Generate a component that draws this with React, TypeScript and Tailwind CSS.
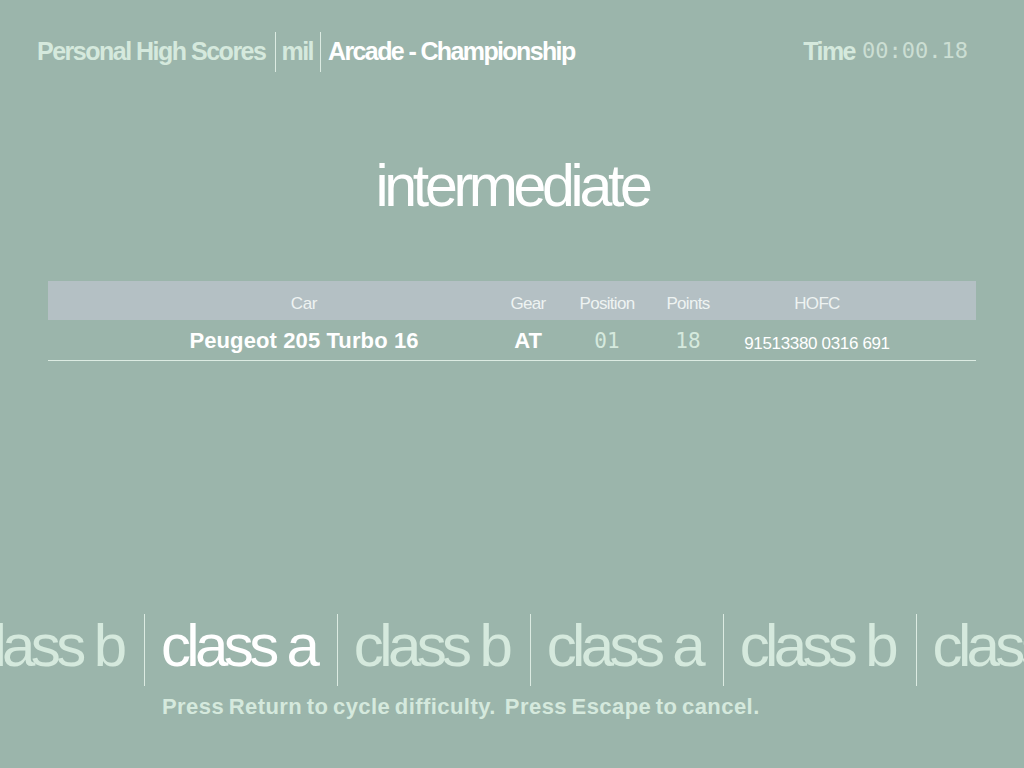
import React from "react";

const sans = { fontFamily: '"Liberation Sans", Arial, sans-serif' };
const mono = { fontFamily: '"DejaVu Sans Mono", "Liberation Mono", monospace' };

const carousel = [
  { label: "class b", active: false },
  { label: "class a", active: true },
  { label: "class b", active: false },
  { label: "class a", active: false },
  { label: "class b", active: false },
  { label: "class a", active: false },
];

function Sep({ className = "" }: { className?: string }) {
  return <div className={`w-px bg-[#dcebe2] ${className}`} />;
}

export default function App() {
  return (
    <div className="flex h-[768px] w-full flex-col overflow-hidden bg-[#9bb5ab]" style={sans}>
      {/* top bar */}
      <header className="flex h-[42px] items-center justify-between pl-[37px] pr-[56px] mt-[30px]">
        <div className="flex h-full items-center text-[25px] font-bold leading-none tracking-[-0.06em]">
          <span className="text-[#d5e9dd]">Personal High Scores</span>
          <Sep className="ml-[10px] mr-[5px] h-[40px] self-end" />
          <span className="text-[#d5e9dd]">mil</span>
          <Sep className="ml-[7px] mr-[7px] h-[40px] self-end" />
          <span className="tracking-[-0.065em] text-white">Arcade - Championship</span>
        </div>
        <div className="flex items-center gap-[7px] leading-none">
          <span className="text-[25px] font-bold tracking-[-0.06em] text-[#d5e9dd]">Time</span>
          <span className="text-[22px] text-[#cbded3]" style={mono}>
            00:00.18
          </span>
        </div>
      </header>

      {/* difficulty title */}
      <h1 className="mt-[85px] text-center text-[59px] leading-none tracking-[-0.073em] text-white">
        intermediate
      </h1>

      {/* scores table */}
      <div className="mx-[48px] mt-[65px]">
        <div className="grid h-[39px] grid-cols-[388px_60px_98px_64px_194px] items-center bg-[#b4c0c4] px-[62px] pt-[6px] text-[17px] leading-none text-[#eef3f2]">
          <div className="flex justify-center tracking-[-0.02em]">Car</div>
          <div className="flex justify-center tracking-[-0.04em]">Gear</div>
          <div className="flex justify-center tracking-[-0.04em]">Position</div>
          <div className="flex justify-center tracking-[-0.04em]">Points</div>
          <div className="flex justify-center tracking-[-0.04em]">HOFC</div>
        </div>
        <div className="grid h-[41px] grid-cols-[388px_60px_98px_64px_194px] items-center border-b border-[#dcebe2] px-[62px] pt-[2px] leading-none">
          <div className="flex justify-center whitespace-nowrap text-[22px] font-bold tracking-[0.005em] text-white">
            Peugeot 205 Turbo 16
          </div>
          <div className="flex justify-center text-[22px] font-bold text-white">AT</div>
          <div className="flex justify-center text-[21px] text-[#d5e9dd]" style={mono}>
            01
          </div>
          <div className="flex justify-center text-[21px] text-[#d5e9dd]" style={mono}>
            18
          </div>
          <div className="flex justify-center whitespace-nowrap pt-[5px] text-[17px] tracking-[-0.02em] text-white">
            91513380 0316 691
          </div>
        </div>
      </div>

      {/* difficulty class carousel */}
      <div className="mt-[253px] flex items-center whitespace-nowrap">
        <div className="ml-[-32px] flex items-center">
          {carousel.map((c, i) => (
            <div key={i} className="flex items-center">
              {i > 0 && <Sep className="mr-[15.5px] h-[72px]" />}
              <span
                className={`mb-[8px] mr-[22px] text-[60px] leading-none tracking-[-0.077em] ${
                  c.active ? "text-white" : "text-[#d5e9dd]"
                }`}
              >
                {c.label}
              </span>
            </div>
          ))}
        </div>
      </div>

      <p className="mt-[10px] whitespace-pre pl-[162px] text-[22px] font-bold leading-none tracking-[0.02em] [word-spacing:-2px] text-[#d5e9dd]">
        Press Return to cycle difficulty.  Press Escape to cancel.
      </p>
    </div>
  );
}
